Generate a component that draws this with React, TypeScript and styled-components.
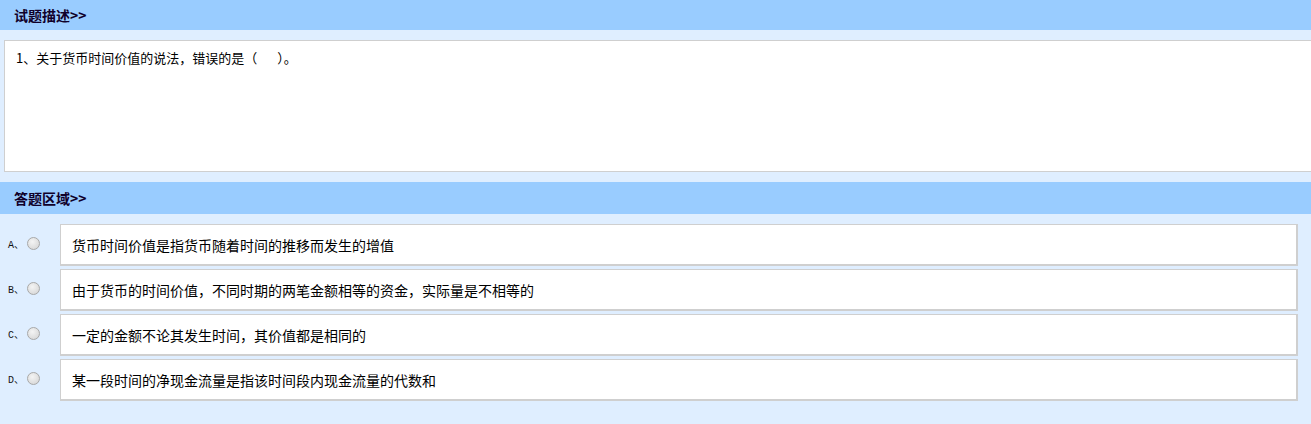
import React from "react";
import styled, { createGlobalStyle } from "styled-components";

const GlobalStyle = createGlobalStyle`
  html, body {
    margin: 0;
    padding: 0;
    background-color: #dfeeff;
    font-family: "Noto Sans CJK SC", "Liberation Sans", sans-serif;
    color: #000;
  }
`;

const Page = styled.div`
  width: 100%;
  height: 424px;
  overflow: hidden;
  background-color: #dfeeff;
`;

const SectionTitle = styled.div<{ $h: number }>`
  height: ${(p) => p.$h}px;
  line-height: ${(p) => p.$h}px;
  background-color: #99ccff;
  padding-left: 14px;
  font-size: 14px;
  font-weight: bold;
  color: #10002a;
`;

const QuestionWrap = styled.div`
  padding: 10px 0 0 4px;
`;

const QuestionBox = styled.div`
  box-sizing: border-box;
  height: 132px;
  background-color: #fff;
  border: 1px solid #cfcfcf;
  border-right: none;
  padding: 9px 11px;
  font-size: 13px;
  line-height: 16px;
`;

const Blank = styled.span`
  display: inline-block;
  width: 20px;
`;

const Spacer = styled.div`
  height: 10px;
`;

const OptionList = styled.div`
  display: flex;
  flex-direction: column;
  gap: 3px;
  padding: 10px 13px 0 0;
`;

const OptionRow = styled.div`
  display: flex;
  align-items: center;
`;

const OptionLabel = styled.div`
  display: flex;
  align-items: center;
  width: 60px;
  padding-left: 8px;
  box-sizing: border-box;
  margin-top: -3px;
`;

const Letter = styled.span`
  font-family: "Liberation Mono", "Noto Sans CJK SC", monospace;
  font-size: 10px;
  width: 19px;
  color: #111;
`;

const Radio = styled.span`
  display: inline-block;
  box-sizing: border-box;
  width: 13px;
  height: 13px;
  border-radius: 50%;
  border: 1px solid #a8a8a8;
  background: radial-gradient(circle at 40% 35%, #f4f4f4 0%, #dcdcdc 70%, #cfcfcf 100%);
`;

const OptionBox = styled.div`
  flex: 1;
  box-sizing: border-box;
  height: 42px;
  background-color: #fff;
  border: 1px solid #cfcfcf;
  border-right-width: 2px;
  border-bottom-width: 2px;
  display: flex;
  align-items: center;
  padding-left: 11px;
  font-size: 14px;
`;

const options = [
  { key: "A", text: "货币时间价值是指货币随着时间的推移而发生的增值" },
  { key: "B", text: "由于货币的时间价值，不同时期的两笔金额相等的资金，实际量是不相等的" },
  { key: "C", text: "一定的金额不论其发生时间，其价值都是相同的" },
  { key: "D", text: "某一段时间的净现金流量是指该时间段内现金流量的代数和" },
];

const App: React.FC = () => {
  return (
    <>
      <GlobalStyle />
      <Page>
        <SectionTitle $h={30}>试题描述&gt;&gt;</SectionTitle>
        <QuestionWrap>
          <QuestionBox>
            1、关于货币时间价值的说法，错误的是（<Blank />）。
          </QuestionBox>
        </QuestionWrap>
        <Spacer />
        <SectionTitle $h={32}>答题区域&gt;&gt;</SectionTitle>
        <OptionList>
          {options.map((o) => (
            <OptionRow key={o.key}>
              <OptionLabel>
                <Letter>{o.key}、</Letter>
                <Radio />
              </OptionLabel>
              <OptionBox>{o.text}</OptionBox>
            </OptionRow>
          ))}
        </OptionList>
      </Page>
    </>
  );
};

export default App;
